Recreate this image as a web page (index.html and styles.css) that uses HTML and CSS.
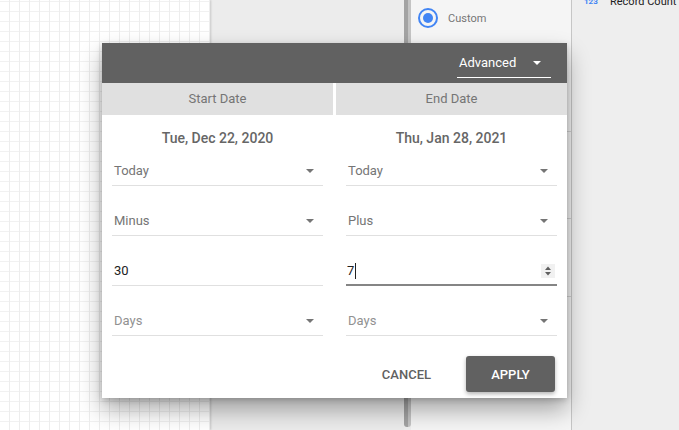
FILE: index.html
```html
<!DOCTYPE html>
<html lang="en">
<head>
    <meta charset="UTF-8">
    <meta name="viewport" content="width=device-width, initial-scale=1.0">
    <title>Date Range - Advanced</title>
    <link rel="stylesheet" href="styles.css">
</head>
<body>
    <div class="workspace">
        <!-- Report canvas -->
        <div class="canvas"></div>
        <div class="side"></div>
        <div class="scrollbar"></div>

        <!-- Properties panel -->
        <div class="props">
            <div class="props-section first">
                <div class="radio-row">
                    <span class="radio"><span class="radio-dot"></span></span>
                    <span class="radio-label">Custom</span>
                </div>
            </div>
            <div class="props-section second"></div>
            <div class="props-section third"></div>
        </div>

        <!-- Data fields panel -->
        <div class="fields">
            <div class="field-item">
                <span class="field-icon">123</span>
                <span class="field-name">Record Count</span>
            </div>
        </div>
    </div>

    <!-- Advanced date range dialog -->
    <div class="dialog">
        <div class="dialog-header">
            <div class="mode-select">
                <span>Advanced</span>
                <span class="caret white"></span>
            </div>
        </div>

        <div class="tabs">
            <div class="tab">Start Date</div>
            <div class="tab">End Date</div>
        </div>

        <div class="columns">
            <div class="column">
                <h3 class="date-title">Tue, Dec 22, 2020</h3>
                <div class="field select"><span>Today</span><span class="caret"></span></div>
                <div class="field select"><span>Minus</span><span class="caret"></span></div>
                <div class="field input"><span class="value">30</span></div>
                <div class="field select muted"><span>Days</span><span class="caret"></span></div>
            </div>
            <div class="column">
                <h3 class="date-title">Thu, Jan 28, 2021</h3>
                <div class="field select"><span>Today</span><span class="caret"></span></div>
                <div class="field select"><span>Plus</span><span class="caret"></span></div>
                <div class="field input focused">
                    <span class="value cursor">7</span>
                    <span class="spinner">
                        <svg width="14" height="14" viewBox="0 0 14 14">
                            <path d="M4 6h6L7 2.5z" fill="#5f5f5f"/>
                            <path d="M4 8h6l-3 3.5z" fill="#5f5f5f"/>
                        </svg>
                    </span>
                </div>
                <div class="field select muted"><span>Days</span><span class="caret"></span></div>
            </div>
        </div>

        <div class="actions">
            <button class="btn-cancel">Cancel</button>
            <button class="btn-apply">Apply</button>
        </div>
    </div>
</body>
</html>
```

FILE: styles.css
```css
/* Resetting default styles */
* {
    margin: 0;
    padding: 0;
    box-sizing: border-box;
}

body {
    width: 679px;
    height: 430px;
    overflow: hidden;
    font-family: Roboto, 'Liberation Sans', sans-serif;
    background: #eeeeee;
    position: relative;
}

.workspace {
    display: flex;
    height: 430px;
}

.canvas {
    width: 210px;
    background-color: #fff;
    background-image:
        linear-gradient(to right, #ededed 1px, transparent 1px),
        linear-gradient(to bottom, #f1f1f1 1px, transparent 1px);
    background-size: 10px 10px;
    background-position: 9px 1px;
    box-shadow: 1px 0 2px rgba(0, 0, 0, 0.15);
    position: relative;
    z-index: 1;
}

.side {
    width: 194px;
    background: #ececec;
}

.scrollbar {
    width: 7px;
    height: 427px;
    background: linear-gradient(to right, #a3a3a3 60%, #c4c4c4 60%);
    border-radius: 0 0 3px 3px;
}

.props {
    width: 161px;
    background: #f5f5f5;
    border-right: 1px solid #c6c6c6;
}

.props-section {
    border-bottom: 1px solid #d2d2d2;
}

.props-section.first {
    height: 132px;
}

.props-section.second {
    height: 87px;
}

.props-section.third {
    height: 78px;
}

.radio-row {
    display: flex;
    align-items: center;
    padding: 8px 0 0 7px;
}

.radio {
    width: 20px;
    height: 20px;
    border: 2px solid #4285f4;
    border-radius: 50%;
    display: flex;
    align-items: center;
    justify-content: center;
}

.radio-dot {
    width: 10px;
    height: 10px;
    border-radius: 50%;
    background: #4285f4;
}

.radio-label {
    margin-left: 10px;
    font-size: 11px;
    color: #757575;
}

.fields {
    flex: 1;
    background: #eeeeee;
}

.field-item {
    display: flex;
    align-items: center;
    margin-top: -5px;
    padding-left: 12px;
    line-height: 14px;
}

.field-icon {
    font-size: 8px;
    font-weight: bold;
    color: #4285f4;
    width: 26px;
}

.field-name {
    font-size: 11px;
    color: #212121;
    white-space: nowrap;
}

/* Dialog */
.dialog {
    position: absolute;
    left: 102px;
    top: 43px;
    width: 465px;
    background: #fff;
    box-shadow: 0 12px 22px rgba(0, 0, 0, 0.33), 0 2px 6px rgba(0, 0, 0, 0.18);
    z-index: 5;
}

.dialog-header {
    height: 40px;
    background: #616161;
    display: flex;
    justify-content: flex-end;
    padding-right: 16px;
}

.mode-select {
    width: 94px;
    height: 35px;
    border-bottom: 1px solid #fff;
    display: flex;
    align-items: flex-end;
    justify-content: space-between;
    padding: 0 10px 7px 2px;
    font-size: 13px;
    color: #fff;
}

.caret {
    width: 0;
    height: 0;
    border-left: 4px solid transparent;
    border-right: 4px solid transparent;
    border-top: 4px solid #757575;
}

.caret.white {
    border-top-color: #fff;
    margin-bottom: 5px;
}

.tabs {
    display: flex;
    gap: 3px;
}

.tab {
    flex: 1;
    height: 32px;
    line-height: 32px;
    background: #e0e0e0;
    text-align: center;
    font-size: 13px;
    color: #757575;
}

.columns {
    display: flex;
    gap: 23px;
    padding: 0 10px;
}

.column {
    width: 211px;
}

.date-title {
    padding-top: 13px;
    line-height: 20px;
    font-size: 14px;
    font-weight: 500;
    color: #666666;
    text-align: center;
}

.field {
    height: 32px;
    margin-top: 18px;
    border-bottom: 1px solid #e0e0e0;
    display: flex;
    align-items: center;
    justify-content: space-between;
    padding: 2px 9px 0 2px;
    font-size: 13px;
    color: #757575;
}

.date-title + .field {
    margin-top: 6px;
}

.field.muted {
    color: #919191;
}

.field.input {
    color: #212121;
    padding-right: 2px;
}

.field.focused {
    border-bottom: 2px solid #858585;
    padding-left: 1px;
    padding-top: 3px;
}

.cursor {
    border-right: 1px solid #212121;
    padding-right: 1px;
    line-height: 16px;
}

.spinner {
    width: 14px;
    height: 14px;
    background: #f1f1f1;
    display: flex;
}

.actions {
    display: flex;
    justify-content: flex-end;
    align-items: center;
    gap: 19px;
    margin-top: 20px;
    padding: 0 12px 6px 0;
}

.actions button {
    height: 36px;
    border: none;
    background: none;
    font-family: inherit;
    font-size: 13px;
    font-weight: 500;
    text-transform: uppercase;
    cursor: pointer;
}

.btn-cancel {
    padding: 0 16px;
    color: #616161;
}

.btn-apply {
    width: 89px;
    background: #616161 !important;
    color: #fff;
    border-radius: 3px;
    box-shadow: 0 2px 4px rgba(0, 0, 0, 0.3);
}
```
